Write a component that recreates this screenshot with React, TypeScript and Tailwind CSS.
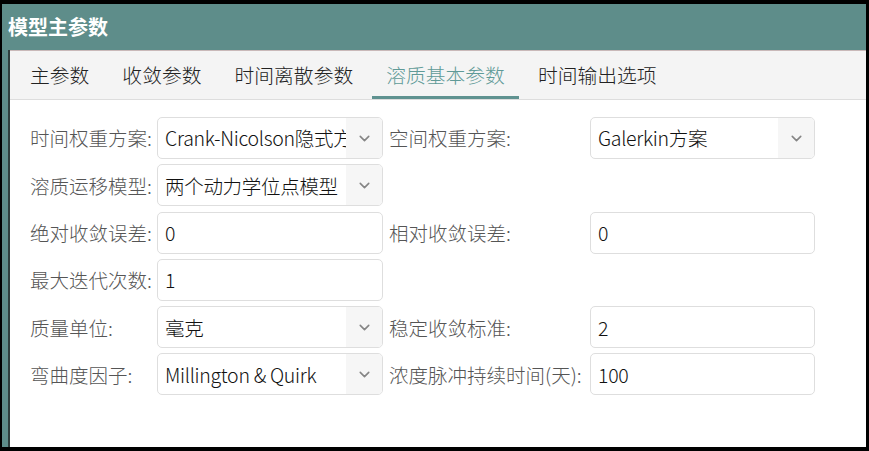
import { ChevronDown } from "lucide-react";

const font = { fontFamily: '"Noto Sans CJK SC", "Liberation Sans", sans-serif' };

type Field = { label: string; value: string; select?: boolean };

const tabs = ["主参数", "收敛参数", "时间离散参数", "溶质基本参数", "时间输出选项"];

const rows: [Field, Field | null][] = [
  [
    { label: "时间权重方案:", value: "Crank-Nicolson隐式方案", select: true },
    { label: "空间权重方案:", value: "Galerkin方案", select: true },
  ],
  [{ label: "溶质运移模型:", value: "两个动力学位点模型", select: true }, null],
  [
    { label: "绝对收敛误差:", value: "0" },
    { label: "相对收敛误差:", value: "0" },
  ],
  [{ label: "最大迭代次数:", value: "1" }, null],
  [
    { label: "质量单位:", value: "毫克", select: true },
    { label: "稳定收敛标准:", value: "2" },
  ],
  [
    { label: "弯曲度因子:", value: "Millington & Quirk", select: true },
    { label: "浓度脉冲持续时间(天):", value: "100" },
  ],
];

function Box({ field, width }: { field: Field; width: string }) {
  return (
    <div
      className={`${width} h-[42px] flex border border-[#dedede] rounded-[5px] bg-white overflow-hidden`}
    >
      <div className="flex-1 min-w-0 flex items-center pl-[7px] text-[19.5px] tracking-[-0.3px] text-[#111] whitespace-nowrap overflow-hidden">
        {field.value}
      </div>
      {field.select && (
        <div className="w-[36px] shrink-0 flex items-center justify-center bg-[#f6f6f6]">
          <ChevronDown size={17} strokeWidth={2.2} className="text-[#858585]" />
        </div>
      )}
    </div>
  );
}

export default function App() {
  return (
    <div
      className="w-[869px] h-[451px] bg-black pt-[4px] pl-[2px] pr-[3px] pb-[4px]"
      style={font}
    >
      <div className="w-full h-full bg-[#5e8d8a] flex flex-col">
        {/* title bar */}
        <div className="h-[46px] shrink-0 flex items-center pl-[6px] text-white font-bold text-[20px]">
          模型主参数
        </div>

        <div className="flex-1 flex pl-[6px]">
          <div className="flex-1 flex flex-col bg-white border-l-2 border-[#2f3f3e] font-light">
            {/* tabs */}
            <div className="h-[50px] shrink-0 bg-[#f4f4f4] border-t border-[#c9b9b9] border-b border-b-[#dddddd] flex items-end pl-[6px] gap-[5px]">
              {tabs.map((t, i) => (
                <div
                  key={t}
                  className={`h-full flex items-center px-[14px] pt-[2px] text-[19.8px] border-b-[3px] ${
                    i === 3
                      ? "text-[#5f9a97] border-[#5f9290]"
                      : "text-[#222] border-transparent"
                  }`}
                >
                  {t}
                </div>
              ))}
            </div>

            {/* form */}
            <div className="flex flex-col gap-[5.3px] pt-[17px] pl-[20px]">
              {rows.map(([a, b], i) => (
                <div key={i} className="flex items-center">
                  <div className="w-[127px] text-[19.5px] text-[#555] whitespace-nowrap">
                    {a.label}
                  </div>
                  <Box field={a} width="w-[226px]" />
                  {b && (
                    <>
                      <div className="w-[201px] ml-[6px] text-[19.5px] text-[#555] whitespace-nowrap">
                        {b.label}
                      </div>
                      <Box field={b} width="w-[225px]" />
                    </>
                  )}
                </div>
              ))}
            </div>
          </div>
        </div>
      </div>
    </div>
  );
}
